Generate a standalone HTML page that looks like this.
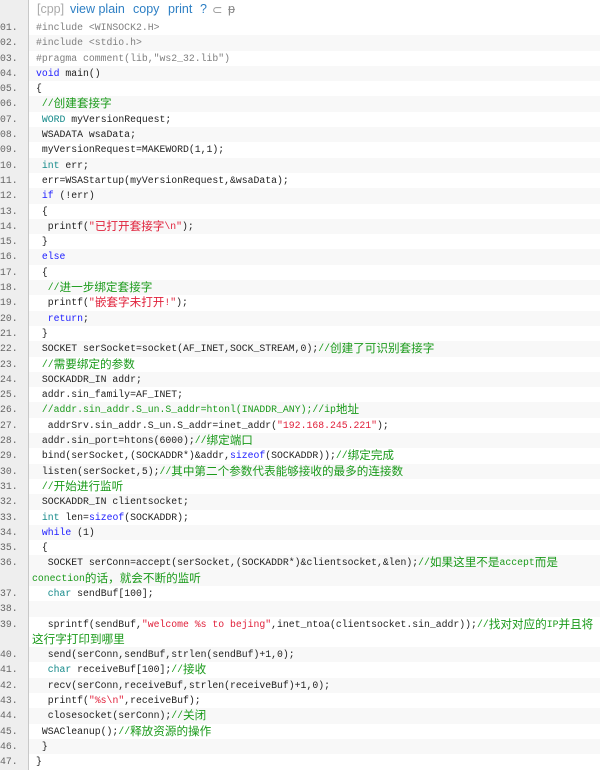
<!DOCTYPE html>
<html><head><meta charset="utf-8"><style>
body{margin:0;width:600px;height:770px;overflow:hidden;background:#fff;font-family:"Liberation Mono","Noto Sans CJK SC",monospace;font-size:9.8px;color:#222}
.hd{height:20px;position:relative;background:#fff;font-family:"Liberation Sans",sans-serif;font-size:12.5px;}
.hd .g{position:absolute;left:0;top:0;width:28px;height:20px;background:#eee;border-right:1px solid #c8c8c8}
.hd span{position:absolute;top:2px}
.hd .cpp{left:37px;color:#aaa}
.hd a{color:#2d7fc4}
ol{margin:0;padding:0;list-style:none}
li{position:relative;padding-left:36px;line-height:15.3px;height:15.3px;white-space:pre;overflow:visible}
li.two{height:30.6px}
li:nth-child(even){background:#f8f8f8}
li::before{content:attr(n);position:absolute;left:0;top:0;width:28px;height:100%;background:#eee;border-right:1px solid #c8c8c8;color:#666;font-size:9.8px}
.z{font-size:11.6px;font-family:"Noto Sans CJK SC",sans-serif;line-height:10px;display:inline-block;vertical-align:-1px}
.c{color:#1a9a1a}.k{color:#2020ff}.t{color:#158a8a}.s{color:#e0203a}.p{color:#808080}
.w{margin-left:-4px;display:block;height:15.3px}
</style></head><body>
<div class="hd"><div class="g"></div><span class="cpp">[cpp]</span><span style="left:70px"><a>view plain</a></span><span style="left:133px"><a>copy</a></span><span style="left:168px"><a>print</a></span><span style="left:200px"><a>?</a></span><span style="left:212px;color:#999">⊂</span><span style="left:228px;color:#888">ᵽ</span></div>
<ol>
<li n="01."><span class="p">#include &lt;WINSOCK2.H&gt;</span></li>
<li n="02."><span class="p">#include &lt;stdio.h&gt;</span></li>
<li n="03."><span class="p">#pragma comment(lib,"ws2_32.lib")</span></li>
<li n="04."><span class="k">void</span> main()</li>
<li n="05.">{</li>
<li n="06."> <span class="c">//<span class="z">创建套接字</span></span></li>
<li n="07."> <span class="t">WORD</span> myVersionRequest;</li>
<li n="08."> WSADATA wsaData;</li>
<li n="09."> myVersionRequest=MAKEWORD(1,1);</li>
<li n="10."> <span class="t">int</span> err;</li>
<li n="11."> err=WSAStartup(myVersionRequest,&amp;wsaData);</li>
<li n="12."> <span class="k">if</span> (!err)</li>
<li n="13."> {</li>
<li n="14.">  printf(<span class="s">"<span class="z">已打开套接字</span>\n"</span>);</li>
<li n="15."> }</li>
<li n="16."> <span class="k">else</span></li>
<li n="17."> {</li>
<li n="18.">  <span class="c">//<span class="z">进一步绑定套接字</span></span></li>
<li n="19.">  printf(<span class="s">"<span class="z">嵌套字未打开</span>!"</span>);</li>
<li n="20.">  <span class="k">return</span>;</li>
<li n="21."> }</li>
<li n="22."> SOCKET serSocket=socket(AF_INET,SOCK_STREAM,0);<span class="c">//<span class="z">创建了可识别套接字</span></span></li>
<li n="23."> <span class="c">//<span class="z">需要绑定的参数</span></span></li>
<li n="24."> SOCKADDR_IN addr;</li>
<li n="25."> addr.sin_family=AF_INET;</li>
<li n="26."> <span class="c">//addr.sin_addr.S_un.S_addr=htonl(INADDR_ANY);//ip<span class="z">地址</span></span></li>
<li n="27.">  addrSrv.sin_addr.S_un.S_addr=inet_addr(<span class="s">"192.168.245.221"</span>);</li>
<li n="28."> addr.sin_port=htons(6000);<span class="c">//<span class="z">绑定端口</span></span></li>
<li n="29."> bind(serSocket,(SOCKADDR*)&amp;addr,<span class="k">sizeof</span>(SOCKADDR));<span class="c">//<span class="z">绑定完成</span></span></li>
<li n="30."> listen(serSocket,5);<span class="c">//<span class="z">其中第二个参数代表能够接收的最多的连接数</span></span></li>
<li n="31."> <span class="c">//<span class="z">开始进行监听</span></span></li>
<li n="32."> SOCKADDR_IN clientsocket;</li>
<li n="33."> <span class="t">int</span> len=<span class="k">sizeof</span>(SOCKADDR);</li>
<li n="34."> <span class="k">while</span> (1)</li>
<li n="35."> {</li>
<li n="36." class="two">  SOCKET serConn=accept(serSocket,(SOCKADDR*)&amp;clientsocket,&amp;len);<span class="c">//<span class="z">如果这里不是</span>accept<span class="z">而是</span><span class="w">conection<span class="z">的话，就会不断的监听</span></span></span></li>
<li n="37.">  <span class="t">char</span> sendBuf[100];</li>
<li n="38."> </li>
<li n="39." class="two">  sprintf(sendBuf,<span class="s">"welcome %s to bejing"</span>,inet_ntoa(clientsocket.sin_addr));<span class="c">//<span class="z">找对对应的</span>IP<span class="z">并且将</span><span class="w"><span class="z">这行字打印到哪里</span></span></span></li>
<li n="40.">  send(serConn,sendBuf,strlen(sendBuf)+1,0);</li>
<li n="41.">  <span class="t">char</span> receiveBuf[100];<span class="c">//<span class="z">接收</span></span></li>
<li n="42.">  recv(serConn,receiveBuf,strlen(receiveBuf)+1,0);</li>
<li n="43.">  printf(<span class="s">"%s\n"</span>,receiveBuf);</li>
<li n="44.">  closesocket(serConn);<span class="c">//<span class="z">关闭</span></span></li>
<li n="45."> WSACleanup();<span class="c">//<span class="z">释放资源的操作</span></span></li>
<li n="46."> }</li>
<li n="47.">}</li>
</ol>
</body></html>
